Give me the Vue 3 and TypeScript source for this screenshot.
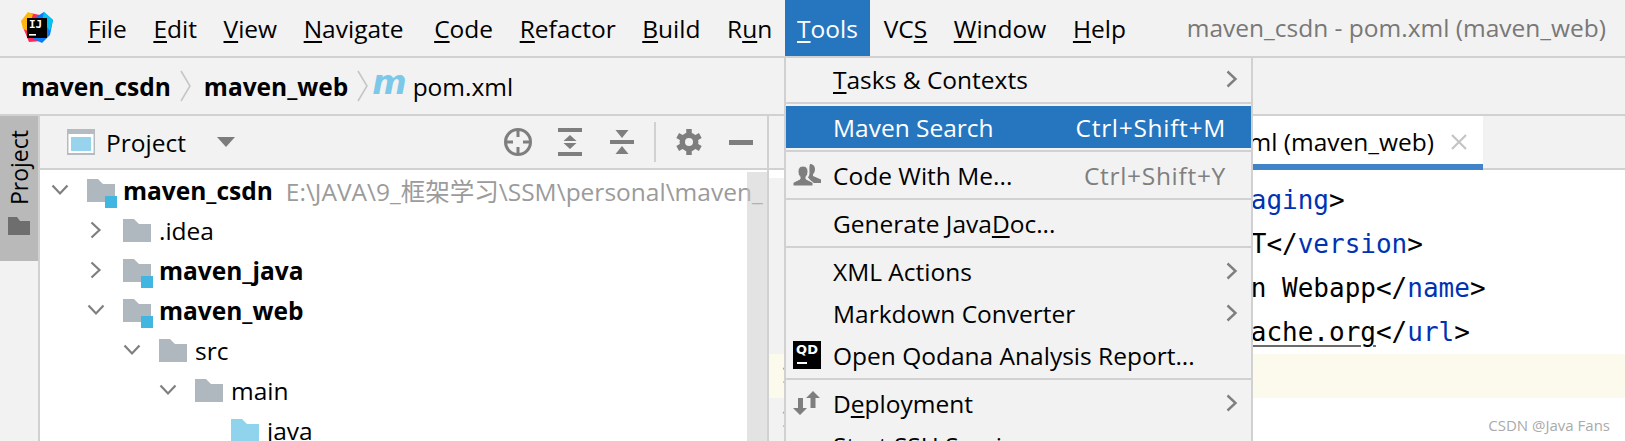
<script setup lang="ts">
interface MenuItem { label: string; key?: number; sub?: boolean; shortcut?: string; icon?: string; active?: boolean; sep?: boolean }
const topMenus = [
  { t: 'File', k: 0 }, { t: 'Edit', k: 0 }, { t: 'View', k: 0 }, { t: 'Navigate', k: 0 }, { t: 'Code', k: 0 },
  { t: 'Refactor', k: 0 }, { t: 'Build', k: 0 }, { t: 'Run', k: 1 }, { t: 'Tools', k: 0 }, { t: 'VCS', k: 2 },
  { t: 'Window', k: 0 }, { t: 'Help', k: 0 },
]
function parts(t: string, k: number) {
  return [t.slice(0, k), t.slice(k, k + 1), t.slice(k + 1)]
}
const menu: MenuItem[] = [
  { label: 'Tasks & Contexts', key: 0, sub: true, sep: true },
  { label: 'Maven Search', shortcut: 'Ctrl+Shift+M', active: true, sep: true },
  { label: 'Code With Me...', shortcut: 'Ctrl+Shift+Y', icon: 'users', sep: true },
  { label: 'Generate JavaDoc...', key: 13, sep: true },
  { label: 'XML Actions', sub: true },
  { label: 'Markdown Converter', sub: true },
  { label: 'Open Qodana Analysis Report...', icon: 'qd', sep: true },
  { label: 'Deployment', key: 1, sub: true, icon: 'deploy' },
  { label: 'Start SSH Session...' },
]
const tree = [
  { name: 'maven_csdn', bold: true, depth: 0, open: true, mod: true, hint: 'E:\\JAVA\\9_框架学习\\SSM\\personal\\maven_' },
  { name: '.idea', depth: 1, open: false },
  { name: 'maven_java', bold: true, depth: 1, open: false, mod: true },
  { name: 'maven_web', bold: true, depth: 1, open: true, mod: true },
  { name: 'src', depth: 2, open: true },
  { name: 'main', depth: 3, open: true },
  { name: 'java', depth: 4, blue: true },
]
</script>

<template>
  <div class="ide">
    <header class="menubar">
      <svg class="logo" width="34" height="34" viewBox="0 0 34 34">
        <polygon points="3,9 10,2 20,4 22,30 9,31 4,19" fill="#fe2857" />
        <polygon points="1,10 8,1 13,3 8,20 3,18" fill="#fdb60d" />
        <polygon points="16,6 24,1 33,9 30,24 22,32 14,28" fill="#087cfa" />
        <polygon points="24,1 33,9 30,20 22,10" fill="#07c3f2" />
        <rect x="7" y="7" width="20" height="20" fill="#000" />
        <text x="9" y="17" class="logo-text">IJ</text>
        <rect x="9" y="23" width="7" height="1.6" fill="#fff" />
      </svg>
      <nav class="menus">
        <span v-for="m in topMenus" :key="m.t" class="top" :class="{ on: m.t === 'Tools' }">{{ parts(m.t, m.k)[0] }}<u>{{ parts(m.t, m.k)[1] }}</u>{{ parts(m.t, m.k)[2] }}</span>
      </nav>
      <span class="title">maven_csdn - pom.xml (maven_web)</span>
    </header>

    <div class="crumbs">
      <b>maven_csdn</b>
      <svg class="crumb-sep" width="14" height="32" viewBox="0 0 14 32"><path d="M2 1l9 15-9 15" fill="none" stroke="#c6c6c6" stroke-width="1.6" /></svg>
      <b>maven_web</b>
      <svg class="crumb-sep" width="14" height="32" viewBox="0 0 14 32"><path d="M2 1l9 15-9 15" fill="none" stroke="#c6c6c6" stroke-width="1.6" /></svg>
      <i class="mvn">m</i>
      <span>pom.xml</span>
    </div>

    <main class="body">
      <aside class="strip">
        <div class="stripe-btn">
          <span class="stripe-label">Project</span>
          <svg width="22" height="18" viewBox="0 0 22 18"><path d="M0 0h9l3 4h10v14H0z" fill="#6e6e6e" /></svg>
        </div>
      </aside>

      <section class="project">
        <div class="tool-head">
          <svg class="pane-icon" width="28" height="26" viewBox="0 0 28 26"><rect width="28" height="26" fill="#b4bcc2" /><rect x="1.500" y="5" width="25" height="19" fill="#fff" /><rect x="4" y="8" width="20" height="14" fill="#97d3ec" /></svg>
          <span class="pane-title">Project</span>
          <svg class="caret" width="18" height="10" viewBox="0 0 18 10"><path d="M0 0h18L9 10z" fill="#7c7c7c" /></svg>
          <div class="tools">
            <svg width="28" height="28" viewBox="0 0 28 28"><circle cx="14" cy="14" r="12.500" fill="none" stroke="#7e7e7e" stroke-width="3" /><path d="M14 1v8M14 19v8M1 14h8M19 14h8" stroke="#7e7e7e" stroke-width="3" /></svg>
            <svg width="24" height="28" viewBox="0 0 24 28" class="t2"><path d="M0 2h24M0 26h24" stroke="#7e7e7e" stroke-width="4" /><path d="M12 7l6.500 6h-13zM12 21l6.500-6h-13z" fill="#7e7e7e" /></svg>
            <svg width="24" height="24" viewBox="0 0 24 24" class="t3"><path d="M0 12h24" stroke="#7e7e7e" stroke-width="4" /><path d="M12 8L5.500 0h13zM12 16l6.500 8h-13z" fill="#7e7e7e" /></svg>
            <span class="t-sep"></span>
            <svg width="26" height="26" viewBox="0 0 26 26"><path d="M13 0v26M1.700 6.500l22.600 13M24.300 6.500l-22.600 13" stroke="#7e7e7e" stroke-width="5.500" /><circle cx="13" cy="13" r="9.500" fill="#7e7e7e" /><circle cx="13" cy="13" r="4" fill="#f2f2f2" /></svg>
            <svg width="24" height="5" viewBox="0 0 24 5" class="t5"><rect width="24" height="5" fill="#7e7e7e" /></svg>
          </div>
        </div>
        <div class="tree-wrap">
          <ul class="tree">
            <li v-for="n in tree" :key="n.name" :class="'d' + n.depth">
              <span class="chev">
                <svg v-if="n.open === true" width="18" height="12" viewBox="0 0 18 12"><path d="M1.500 1.500L9 9.500l7.500-8" fill="none" stroke="#7f7f7f" stroke-width="2.200" /></svg>
                <svg v-else-if="n.open === false" width="12" height="18" viewBox="0 0 12 18"><path d="M1.500 1.500l8 7.500-8 7.500" fill="none" stroke="#7f7f7f" stroke-width="2.200" /></svg>
              </span>
              <span class="folder">
                <svg width="28" height="23" viewBox="0 0 28 23"><path d="M0 0h11l5 5h12v18H0z" :fill="n.blue ? '#8fd3ec' : '#afb8bf'" /></svg>
                <i v-if="n.mod" class="mod"></i>
              </span>
              <span class="name" :class="{ bold: n.bold }">{{ n.name }}</span>
              <span v-if="n.hint" class="hint">{{ n.hint }}</span>
            </li>
          </ul>
          <div class="scroll"></div>
        </div>
      </section>

      <section class="editor">
        <div class="tabbar">
          <div class="tab">
            <span class="tab-text">pom.xml (maven_web)</span>
            <svg width="16" height="16" viewBox="0 0 16 16"><path d="M1 1l14 14M15 1L1 15" stroke="#c4c4c4" stroke-width="2.200" /></svg>
          </div>
        </div>
        <div class="code">
          <div class="line"><span class="no">6</span><span class="txt">  &lt;<span class="tag">packaging</span>&gt;war&lt;/<span class="tag">packaging</span>&gt;</span></div>
          <div class="line"><span class="no">7</span><span class="txt">  &lt;<span class="tag">version</span>&gt;1.0-SNAPSHOT&lt;/<span class="tag">version</span>&gt;</span></div>
          <div class="line"><span class="no">8</span><span class="txt">  &lt;<span class="tag">name</span>&gt;maven_web Maven Webapp&lt;/<span class="tag">name</span>&gt;</span></div>
          <div class="line"><span class="no">9</span><span class="txt">  &lt;<span class="tag">url</span>&gt;<span class="link">http://maven.apache.org</span>&lt;/<span class="tag">url</span>&gt;</span></div>
          <div class="line cur"><span class="no">10</span><span class="txt"></span></div>
          <div class="line"><span class="no">11</span><span class="txt"></span></div>
          <span class="mark">CSDN @Java Fans</span>
        </div>
      </section>
    </main>

    <div class="drop">
      <template v-for="it in menu" :key="it.label">
        <div class="item" :class="{ active: it.active }">
          <span class="ico">
            <svg v-if="it.icon === 'users'" width="28" height="22" viewBox="0 0 28 22"><path d="M17 0c3.300 0 5 2.300 5 5.200 0 2.200-.9 4-2 5v1.800l8 3.500V19h-8l-5-5.500c1-1.500 1.500-3 1.500-5 0-3-.5-5.500.5-8.500z" fill="#7e7e7e" /><path d="M10 2c3.300 0 5 2.400 5 5.500 0 2.300-.9 4.200-2 5.300v2.200l7 3.500V22H0v-3.500L7 15v-2.200C5.900 11.700 5 9.800 5 7.500 5 4.400 6.700 2 10 2z" fill="#7e7e7e" stroke="#f2f2f2" stroke-width="1" /></svg>
            <span v-else-if="it.icon === 'qd'" class="qd"><b>QD</b><i></i></span>
            <svg v-else-if="it.icon === 'deploy'" width="28" height="24" viewBox="0 0 28 24"><path d="M5 7h5v10h4l-7 7-7-7h5z" fill="#7e7e7e" /><path d="M20 0l7 7h-4.500v10h-5V7H13z" fill="#7e7e7e" /></svg>
          </span>
          <span class="label">
            <template v-if="it.key !== undefined">{{ parts(it.label, it.key)[0] }}<u>{{ parts(it.label, it.key)[1] }}</u>{{ parts(it.label, it.key)[2] }}</template>
            <template v-else>{{ it.label }}</template>
          </span>
          <span v-if="it.shortcut" class="short">{{ it.shortcut }}</span>
          <svg v-if="it.sub" class="arrow" width="12" height="18" viewBox="0 0 12 18"><path d="M1.500 1.500l8 7.500-8 7.500" fill="none" stroke="#7f7f7f" stroke-width="2.400" /></svg>
        </div>
        <div v-if="it.sep" class="sep"></div>
      </template>
    </div>
  </div>
</template>

<style>
html, body { margin: 0; overflow: hidden; background: #f2f2f2; }
</style>

<style scoped>
.ide {
  position: relative;
  width: 1625px;
  height: 441px;
  overflow: hidden;
  display: flex;
  flex-direction: column;
  background: #f2f2f2;
  color: #000;
  font-family: "Open Sans", "Noto Sans CJK SC", sans-serif;
  font-size: 24.5px;
}
u { text-underline-offset: 3px; text-decoration-thickness: 2px; }
.menubar {
  height: 56px;
  flex: none;
  display: flex;
  align-items: center;
  border-bottom: 2px solid #d1d1d1;
}
.logo { margin-left: 20px; flex: none; }
.logo-text { font: 700 11px "DejaVu Sans Mono", monospace; fill: #fff; }
.menus { display: flex; margin-left: 20.7px; height: 56px; }
.top { display: flex; align-items: center; padding: 0 13.3px; white-space: pre; }
.top:nth-child(4) { padding-right: 17.3px; }
.top.on { background: #2675bf; color: #fff; padding: 0 12.5px; margin-left: -1px; }
.title { margin: -2px 19px 0 auto; color: #787878; }
.crumbs {
  height: 56px;
  flex: none;
  display: flex;
  align-items: center;
  padding-left: 21px;
  border-bottom: 2px solid #d1d1d1;
}
.crumbs b { font-weight: 700; }
.crumb-sep { margin: 0 11px 0 8px; }
.mvn { font: italic 700 33px "DejaVu Sans", sans-serif; color: #7bc8e8; margin: -8px 6px 0 -9px; }
.body { flex: 1; display: flex; min-height: 0; }
.strip { width: 38px; flex: none; border-right: 2px solid #d1d1d1; }
.stripe-btn {
  height: 145px;
  background: #b9b9b9;
  display: flex;
  flex-direction: column;
  align-items: center;
  padding-top: 14px;
  box-sizing: border-box;
  gap: 12px;
}
.stripe-label { writing-mode: vertical-rl; transform: rotate(180deg); font-size: 23px; line-height: 26px; }
.project { width: 727px; flex: none; display: flex; flex-direction: column; border-right: 2px solid #d1d1d1; }
.tool-head { height: 52px; flex: none; display: flex; align-items: center; padding-left: 27px; border-bottom: 2px solid #d1d1d1; }
.pane-icon { flex: none; }
.pane-title { margin-left: 11px; }
.caret { margin-left: 31px; }
.tools { margin-left: auto; display: flex; align-items: center; margin-right: 14px; }
.t2 { margin-left: 26px; }
.t3 { margin-left: 28px; }
.t-sep { width: 2px; height: 40px; background: #d1d1d1; margin: 0 20px; }
.t5 { margin-left: 27px; }
.tree-wrap { position: relative; flex: 1; min-height: 0; background: #fff; }
.tree { margin: 0; padding: 0; list-style: none; overflow: hidden; height: 100%; }
.tree li { height: 40px; display: flex; align-items: center; white-space: nowrap; }
.d0 { padding-left: 11px; }
.d1 { padding-left: 47px; }
.d2 { padding-left: 83px; }
.d3 { padding-left: 119px; }
.d4 { padding-left: 155px; }
.chev { width: 36px; flex: none; }
.chev svg { display: block; margin-left: 0; }
.d1 .chev svg[width="12"] { margin-left: 3px; }
.folder { position: relative; display: flex; flex: none; }
.mod { position: absolute; right: -2px; bottom: -6px; width: 12px; height: 12px; background: #40b6e0; }
.name { margin-left: 8px; }
.name.bold { font-weight: 700; }
.hint { margin-left: 13px; color: #9b9b9b; }
.scroll { position: absolute; top: 2px; right: 0; bottom: 0; width: 20px; background: rgba(200, 200, 200, 0.5); }
.editor { flex: 1; min-width: 0; display: flex; flex-direction: column; }
.tabbar {
  height: 52px;
  flex: none;
  display: flex;
  border-bottom: 2px solid #d1d1d1;
  background: #f2f2f2;
}
.tab {
  margin-left: 200px;
  width: 514px;
  flex: none;
  height: 54px;
  background: #fff;
  border-bottom: 6px solid #4083c9;
  display: flex;
  align-items: center;
  justify-content: flex-end;
  gap: 17px;
  padding: 3px 16px 0 0;
  box-sizing: border-box;
}
.code { position: relative; flex: 1; background: #fff; min-height: 0; padding-top: 8px; font: 26px/44px "DejaVu Sans Mono", monospace; }
.line { height: 44px; display: flex; white-space: pre; }
.line.cur { background: #fcfaed; }
.no { width: 38px; box-sizing: border-box; text-align: right; color: #9a9a9a; font-size: 22px; background: #f2f2f2; flex: none; }
.cur .no { background: #fcfaed; }
.txt { margin-left: 115px; }
.tag { color: #0033b3; }
.link { text-decoration: underline; text-decoration-color: #6b6b6b; text-underline-offset: 4px; text-decoration-thickness: 2px; }
.mark { position: absolute; right: 15px; bottom: 6px; font: 15px/20px "Open Sans", sans-serif; color: #aaa; }
.drop {
  position: absolute;
  left: 784px;
  top: 56px;
  width: 469px;
  box-sizing: border-box;
  background: #f2f2f2;
  border: 2px solid #d1d1d1;
  border-bottom: 0;
}
.item { height: 42px; display: flex; align-items: center; padding-right: 25px; white-space: pre; }
.item.active { background: #2675bf; color: #fff; }
.ico { width: 47px; flex: none; display: flex; padding-left: 7px; box-sizing: border-box; }
.label { flex: 1; }
.short { color: #7f7f7f; letter-spacing: 0.7px; }
.active .short { color: #fff; }
.arrow { margin-right: -12px; }
.sep { height: 2px; background: #d1d1d1; margin: 2px 0; }
.qd { width: 28px; height: 28px; background: #000; color: #fff; display: flex; flex-direction: column; align-items: center; flex: none; }
.qd b { font: 700 13px/14px "DejaVu Sans", sans-serif; margin-top: 2px; }
.qd i { width: 10px; height: 2px; background: #fff; align-self: flex-start; margin: 5px 0 0 4px; }
</style>
